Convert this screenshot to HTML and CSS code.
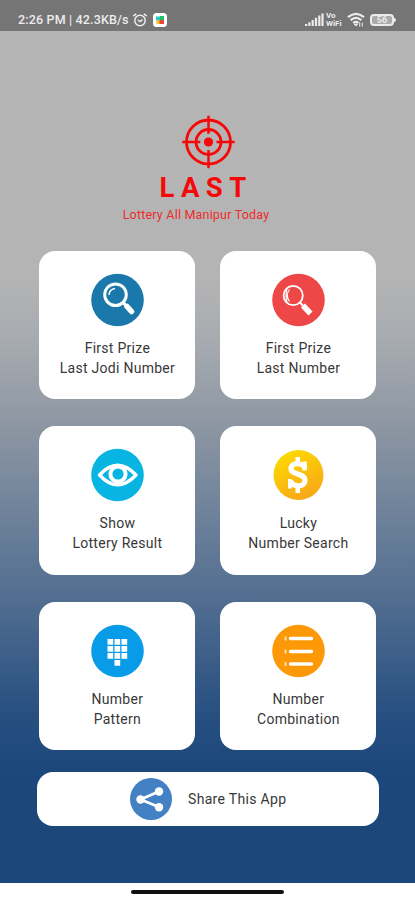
FILE: index.html
```html
<!DOCTYPE html>
<html lang="en">
<head>
<meta charset="utf-8">
<title>Last</title>
<link rel="stylesheet" href="styles.css">
</head>
<body>
<div class="screen">
  <header class="status">
    <span class="status-text">2:26 PM | 42.3KB/s</span>
    <svg class="alarm" width="16" height="16" viewBox="0 0 16 16" fill="none" stroke="#ececec" stroke-width="1.5"><circle cx="8" cy="8.5" r="5.2"/><path d="M1.3 4.2 4.2 1.8M14.7 4.2 11.8 1.8M5.8 8l2.2 1.600L10.600 7.600"/></svg>
    <svg class="app" width="14" height="14" viewBox="0 0 14 14"><rect width="14" height="14" rx="3.5" fill="#fff"/><path d="M3 3.5h5v4H3z" fill="#20c8cf"/><path d="M7 3h4v4H7z" fill="#22bf68"/><path d="M3.500 7.200H7V11H3.500z" fill="#f3c52d"/><path d="M6.500 7H11v4H6.500z" fill="#ed4535"/></svg>
    <span class="spacer"></span>
    <svg class="signal" width="19" height="13" viewBox="0 0 19 13" fill="#ececec"><path d="M0 11h2.200V13H0zM3.300 9.200h2.200V13H3.300zM6.600 7h2.200v6H6.600zM9.900 4.800h2.200V13H9.900zM13.200 2.500h2.200V13h-2.200zM16.400.5h2.200V13h-2.200z"/></svg>
    <span class="vowifi"><span>Vo</span><span>WiFi</span></span>
    <svg class="wifi" width="18" height="15" viewBox="0 0 18 15" fill="none" stroke="#ececec" stroke-width="2.200"><path d="M1 5.200Q9-1.600 17 5.200M3.600 8.200Q9 3.700 14.400 8.200M6.200 11Q9 8.800 11.500 10.800"/><path d="M7.200 12.200h3.300L8.900 14zM12.700 10.500v4M15.200 10.500v4" fill="#ececec" stroke-width="1"/></svg>
    <span class="battery">56</span>
  </header>
  <main class="content">
    <div class="brand">
      <svg class="target" width="54" height="54" viewBox="0 0 54 54" fill="none" stroke="#f60808"><circle cx="27.500" cy="27" r="22" stroke-width="2.800"/><circle cx="27.500" cy="27" r="12.500" stroke-width="2.800"/><circle cx="27.500" cy="27" r="4.600" fill="#f60808" stroke="none"/><path d="M27.500 .8v18M27.500 35v18.200M1.300 27h18M35.500 27h18.200" stroke-width="2.500"/></svg>
      <h1>LAST</h1>
      <p class="tagline">Lottery All Manipur Today</p>
    </div>
    <div class="grid">
      <section class="card">
        <svg class="icon" viewBox="-.5 0 54 54"><circle cx="27" cy="27" r="26.300" fill="#1a78aa"/><g fill="none" stroke="#fff"><circle cx="25" cy="21.700" r="10.800" stroke-width="3"/><path d="M18.500 22a6.500 6.500 0 0 1 6-6.500" stroke-width="1.600"/><path d="M32.500 29.500l3.500 3.600" stroke-width="3"/><path d="M36.500 33.500l4.500 5" stroke-width="5.500" stroke-linecap="round"/></g></svg>
        <p>First Prize<br>Last Jodi Number</p>
      </section>
      <section class="card">
        <svg class="icon" viewBox="-.5 0 54 54"><circle cx="27" cy="27" r="26.300" fill="#ee4748"/><g fill="none" stroke="#fff"><circle cx="21.700" cy="22.500" r="9.600" stroke-width="1.800"/><path d="M18 16.500q-4.500 6 0 12M15.500 16q-2 6.500 0 13" stroke-width="1.200"/><path d="M28.500 29.500l3 3.200" stroke-width="2"/><path d="M31.500 32.500l7.500 8" stroke-width="5.500"/></g></svg>
        <p>First Prize<br>Last Number</p>
      </section>
      <section class="card">
        <svg class="icon" viewBox="-.5 0 54 54"><circle cx="27" cy="27" r="26.300" fill="#08b4e2"/><g fill="none" stroke="#fff"><path d="M9 27Q27 7.500 45.500 27Q27 46.500 9 27z" stroke-width="3.400" stroke-linejoin="round"/><circle cx="27.500" cy="26" r="7.600" stroke-width="4"/></g></svg>
        <p>Show<br>Lottery Result</p>
      </section>
      <section class="card">
        <svg class="icon" viewBox="-.5 0 54 54"><defs><linearGradient id="gold" x1="0" y1="0" x2=".5" y2="1"><stop stop-color="#ffe000"/><stop offset="1" stop-color="#f8aa16"/></linearGradient></defs><circle cx="27" cy="27" r="25" fill="url(#gold)"/><path d="M33.500 20.500C31.500 14 19.500 14 19.500 20.500C19.500 27.500 33.500 24.500 33.500 32.500C33.500 39.500 21.500 39.500 19 33" fill="none" stroke="#fff" stroke-width="5.200"/><path d="M24 9h4.500v7H24zM24 37h4.500v8H24zM31.500 13.500h3.800v9H31zM16.500 31h3.500l2 3-2 6.500h-3.500z" fill="#fff"/></svg>
        <p>Lucky<br>Number Search</p>
      </section>
      <section class="card">
        <svg class="icon" viewBox="-.5 0 54 54"><circle cx="27" cy="27" r="26.300" fill="#089be8"/><path d="M17 15h5.700v5.700H17zM24 15h5.700v5.700H24zM31 15h5.700v5.700H31zM17 22h5.700v5.700H17zM24 22h5.700v5.700H24zM31 22h5.700v5.700H31zM17 29h5.700v5.700H17zM24 29h5.700v5.700H24zM31 29h5.700v5.700H31zM24 36h5.700v5.700H24z" fill="#fff"/></svg>
        <p>Number<br>Pattern</p>
      </section>
      <section class="card">
        <svg class="icon" viewBox="-.5 0 54 54"><circle cx="27" cy="27" r="26.300" fill="#fd9807"/><g stroke="#fff" fill="none"><path d="M19 14.500h21M19 27.500h21M19 40h21" stroke-width="3.400" stroke-linecap="round"/><path d="M14 12.500v4M14 25.500v4M14 38v4" stroke-width="1.800" stroke="#ffe5bd"/></g></svg>
        <p>Number<br>Combination</p>
      </section>
    </div>
    <section class="share">
      <svg width="42" height="42" viewBox="0 0 42 42"><circle cx="21" cy="21" r="21" fill="#4380c4"/><path d="M29 13.500 10.500 21.500 29 29" fill="none" stroke="#fff" stroke-width="2.800"/><g fill="#fff"><circle cx="29" cy="13.500" r="4.200"/><circle cx="10.500" cy="21.500" r="4.200"/><circle cx="29" cy="29.300" r="4.200"/></g></svg>
      <span>Share This App</span>
    </section>
  </main>
  <footer class="nav"><div class="handle"></div></footer>
</div>
</body>
</html>
```
FILE: styles.css
```css
* { box-sizing: border-box; }
body { margin: 0; font-family: Roboto, sans-serif; }
.screen { width: 415px; height: 900px; display: flex; flex-direction: column; overflow: hidden; background: #fff; }
.status { height: 31px; flex: none; display: flex; align-items: center; padding: 8px 21px 0 18px; background: #757575; color: #ececec; }
.status-text { font-size: 12.5px; line-height: 16px; white-space: nowrap; font-weight: 500; letter-spacing: .16px; width: 112px; }
.alarm { margin-left: 2px; }
.app { margin-left: 5px; }
.spacer { flex: 1; }
.signal { margin-right: 2px; }
.vowifi { display: flex; flex-direction: column; width: 18px; margin-right: 3px; font-size: 8px; line-height: 8px; font-weight: 700; }
.wifi { margin-right: 5px; }
.battery { width: 24px; height: 12px; border: 2px solid #ececec; border-radius: 4px; background: #aaa; font-size: 9px; line-height: 8px; font-weight: 700; text-align: center; position: relative; }
.battery::after { content: ""; position: absolute; right: -4px; top: 2px; width: 2px; height: 4px; background: #ececec; border-radius: 0 2px 2px 0; }
.content { height: 852px; flex: none; padding-top: 84px; background: linear-gradient(#b5b5b5 0, #b4b4b4 245px, #a7abb0 310px, #8b95a2 400px, #6a7f99 495px, #4a688d 590px, #285081 680px, #1b477b 745px, #1b477b 100%); display: flex; flex-direction: column; }
.brand { height: 135.5px; flex: none; display: flex; flex-direction: column; align-items: center; color: #f60808; }
.target { margin-left: 1px; overflow: visible; }
h1 { margin: 4px 0 0; padding-right: 3px; font-size: 27.5px; line-height: 30px; font-weight: 700; letter-spacing: 6.4px; }
.tagline { margin: 3px 23px 0 0; font-size: 12.5px; line-height: 18px; letter-spacing: .2px; color: #ee2c2c; white-space: nowrap; }
.grid { display: grid; grid-template-columns: 156px 156px; grid-auto-rows: 148.5px; column-gap: 25px; row-gap: 27px; margin-left: 39.4px; }
.card { background: #fff; border-radius: 16px; display: flex; flex-direction: column; align-items: center; padding-top: 22px; }
.icon { width: 54px; height: 54px; }
.card p { margin: 11px 0 0; font-size: 14px; line-height: 20px; letter-spacing: .28px; text-align: center; color: #383838; white-space: nowrap; }
.share { width: 341.5px; height: 54px; margin: 21.5px 0 0 37px; border-radius: 16px; background: #fff; display: flex; align-items: center; padding-left: 93px; gap: 16px; font-size: 14px; letter-spacing: .32px; color: #383838; }
.nav { flex: 1; display: flex; justify-content: center; padding-top: 7px; }
.handle { width: 153px; height: 4px; border-radius: 2px; background: #111; }
```
